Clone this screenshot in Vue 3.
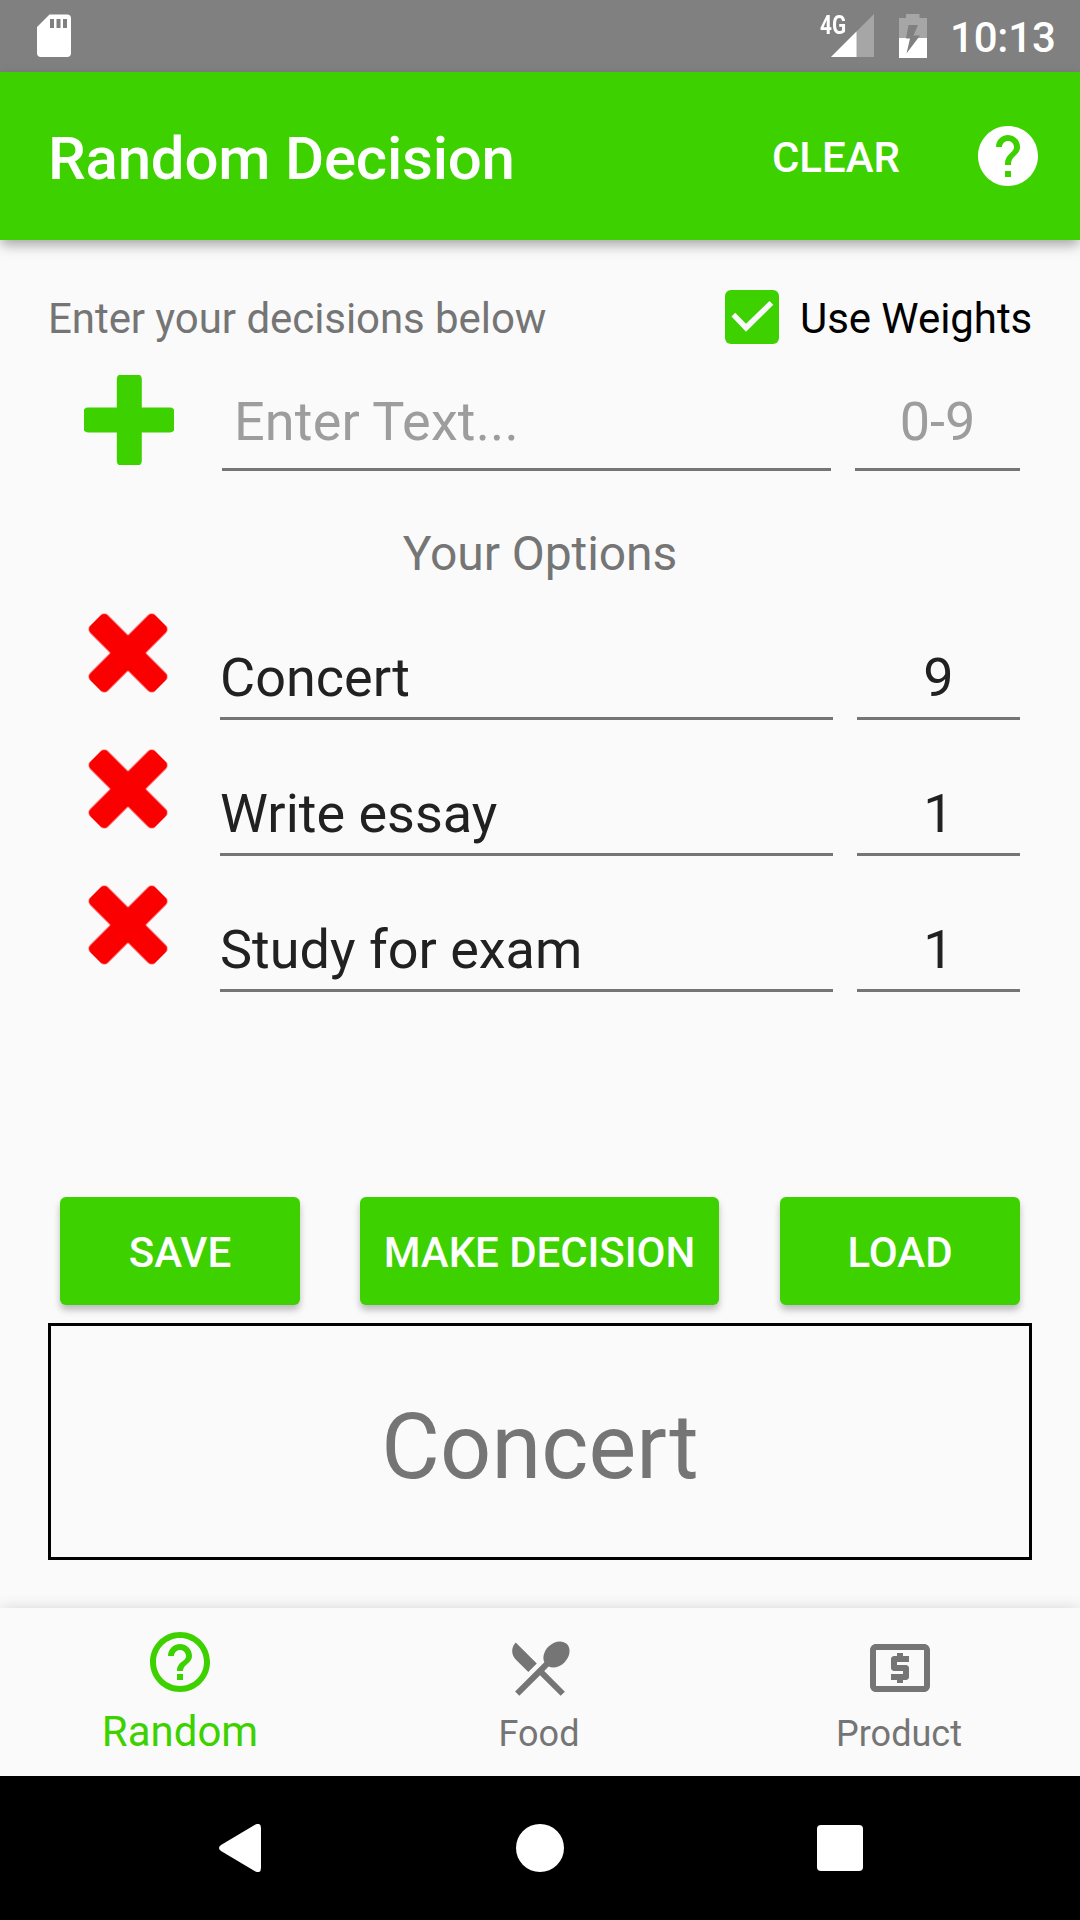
<script setup>
import { ref } from 'vue'

const options = ref([
  { text: 'Concert', weight: 9 },
  { text: 'Write essay', weight: 1 },
  { text: 'Study for exam', weight: 1 },
])
const result = ref('Concert')
</script>

<template>
  <div class="screen">
    <div class="status">
      <svg class="sd" width="34" height="44" viewBox="0 0 34 44">
        <path fill="#fff" fill-rule="evenodd" d="M12.500 .5H30a4 4 0 0 1 4 4V39a4 4 0 0 1-4 4H4a4 4 0 0 1-4-4V13zM13 5v9h4V5zM19.500 5v9h4V5zM26 5v9h4V5z" />
      </svg>
      <div class="status-right">
        <span class="network">4G</span>
        <svg class="signal" width="43" height="43" viewBox="0 0 43 43">
          <path fill="#a6a6a6" d="M43 0V43H0z" />
          <path fill="#fff" d="M25.500 17.500V43H0z" />
        </svg>
        <svg class="battery" width="28" height="44" viewBox="0 0 28 44">
          <path fill="#a6a6a6" d="M7 0H20.500V4H28V24H0V4H7z" />
          <path fill="#fff" d="M0 24H28V44H0z" />
          <path fill="#808080" d="M9.500 11H19L14.500 21.500H21L7.500 39.500L11 24.500H7z" />
        </svg>
        <span class="clock">10:13</span>
      </div>
    </div>

    <header class="appbar">
      <h1>Random Decision</h1>
      <span class="clear">CLEAR</span>
      <svg width="72" height="72" viewBox="0 0 24 24" fill="#fff">
        <path d="M12 2C6.480 2 2 6.480 2 12s4.480 10 10 10 10-4.480 10-10S17.520 2 12 2zm1 17h-2v-2h2v2zm2.070-7.750l-.9.920C13.450 12.900 13 13.500 13 15h-2v-.5c0-1.100.45-2.100 1.170-2.830l1.240-1.260c.37-.36.59-.86.59-1.410 0-1.100-.9-2-2-2s-2 .9-2 2H8c0-2.210 1.790-4 4-4s4 1.790 4 4c0 .88-.36 1.680-.93 2.250z" />
      </svg>
    </header>

    <main>
      <div class="intro">
        <span class="prompt">Enter your decisions below</span>
        <svg width="54" height="54" viewBox="0 0 54 54">
          <rect width="54" height="54" rx="6" fill="#3dd100" />
          <path fill="#fafafa" d="M6.500 26.500L10.200 22.700L21 33.800L44.500 11L48.300 14.800L21 41.700z" />
        </svg>
        <span class="weights">Use Weights</span>
      </div>

      <div class="entry">
        <svg class="plus" width="90" height="90" viewBox="0 0 90 90" fill="#3dd100">
          <g class="soft">
            <rect x="32.800" y="-1" width="25" height="92" rx="5" />
            <rect x="-1" y="32.500" width="92" height="25" rx="5" />
          </g>
        </svg>
        <div class="field hint name">Enter Text...</div>
        <div class="field hint weight">0-9</div>
      </div>

      <h2>Your Options</h2>

      <div v-for="option in options" :key="option.text" class="option">
        <svg class="cross" width="80" height="80" viewBox="-40 -40 80 80" fill="#fb0000">
          <g class="soft" transform="rotate(45)">
            <rect x="-12.500" y="-46" width="25" height="92" rx="5" />
            <rect x="-46" y="-12.500" width="92" height="25" rx="5" />
          </g>
        </svg>
        <div class="field name">{{ option.text }}</div>
        <div class="field weight">{{ option.weight }}</div>
      </div>

      <div class="actions">
        <button class="side">SAVE</button>
        <button class="decide">MAKE DECISION</button>
        <button class="side">LOAD</button>
      </div>

      <div class="result">{{ result }}</div>
    </main>

    <nav class="tabs">
      <div class="tab active">
        <svg width="72" height="72" viewBox="0 0 24 24" fill="currentColor">
          <path d="M11 18h2v-2h-2v2zm1-16C6.480 2 2 6.480 2 12s4.480 10 10 10 10-4.480 10-10S17.520 2 12 2zm0 18c-4.410 0-8-3.590-8-8s3.590-8 8-8 8 3.590 8 8-3.590 8-8 8zm0-14c-2.210 0-4 1.790-4 4h2c0-1.100.9-2 2-2s2 .9 2 2c0 2-3 1.750-3 5h2c0-2.250 3-2.500 3-5 0-2.210-1.790-4-4-4z" />
        </svg>
        <span>Random</span>
      </div>
      <div class="tab">
        <svg width="72" height="72" viewBox="0 0 24 24" fill="currentColor">
          <path d="M8.100 13.340l2.830-2.830L3.910 3.500c-1.560 1.560-1.560 4.090 0 5.660l4.190 4.180zm6.780-1.810c1.530.71 3.680.21 5.270-1.380 1.910-1.910 2.280-4.650.81-6.120-1.460-1.460-4.200-1.100-6.120.81-1.590 1.590-2.090 3.740-1.380 5.270L3.700 19.870l1.410 1.410L12 14.410l6.880 6.880 1.410-1.410L13.410 13l1.470-1.470z" />
        </svg>
        <span>Food</span>
      </div>
      <div class="tab">
        <svg width="72" height="72" viewBox="0 0 24 24" fill="currentColor">
          <path d="M11 17h2v-1h1c.55 0 1-.45 1-1v-3c0-.55-.45-1-1-1h-3v-1h4V8h-2V7h-2v1h-1c-.55 0-1 .45-1 1v3c0 .55.45 1 1 1h3v1H9v2h2v1zm9-13H4c-1.110 0-1.990.89-1.990 2L2 18c0 1.110.89 2 2 2h16c1.110 0 2-.89 2-2V6c0-1.110-.89-2-2-2zm0 14H4V6h16v12z" />
        </svg>
        <span>Product</span>
      </div>
    </nav>

    <div class="system">
      <svg width="42" height="48" viewBox="0 0 42 48" fill="#fff">
        <path d="M36 .7Q42-2 42 4V44Q42 50 36 47.300L2 27Q-2 24 2 21z" />
      </svg>
      <svg class="home" width="48" height="48" viewBox="0 0 48 48" fill="#fff">
        <circle cx="24" cy="24" r="24" />
      </svg>
      <svg width="46" height="46" viewBox="0 0 46 46" fill="#fff">
        <rect width="46" height="46" rx="4" />
      </svg>
    </div>
  </div>
</template>

<style>
body {
  margin: 0;
  background: #fafafa;
}
</style>

<style scoped>
.screen {
  width: 1080px;
  height: 1920px;
  display: flex;
  flex-direction: column;
  overflow: hidden;
  background: #fafafa;
  font-family: Roboto, sans-serif;
  font-size: 42px;
  color: #757575;
}
.screen * {
  box-sizing: border-box;
}
svg {
  display: block;
  flex: none;
}
.soft {
  filter: blur(0.7px);
}
span,
h1,
h2,
.field,
button,
.result {
  white-space: nowrap;
}

.status {
  height: 72px;
  flex: none;
  display: flex;
  justify-content: space-between;
  padding: 14px 24px 0 37px;
  background: #808080;
  color: #fff;
}
.status-right {
  display: flex;
}
.network {
  width: 26px;
  font-size: 26px;
  font-weight: 700;
  line-height: 22px;
  transform: scaleX(0.8);
  transform-origin: 0 0;
  margin-right: -15px;
}
.battery {
  margin-left: 25px;
}
.clock {
  width: 106px;
  margin-left: 23px;
  font-weight: 500;
  line-height: 48px;
  letter-spacing: -0.2px;
}

.appbar {
  position: relative;
  height: 168px;
  flex: none;
  display: flex;
  align-items: center;
  padding: 0 36px 0 48px;
  background: #3dd100;
  color: #fff;
  box-shadow: 0 6px 12px -1px rgba(0, 0, 0, 0.34);
}
h1 {
  flex: 1;
  margin: 0;
  padding-top: 6px;
  font-size: 60px;
  line-height: 70px;
  font-weight: 500;
  letter-spacing: -0.22px;
}
.clear {
  padding-top: 3px;
  margin-right: 72px;
  line-height: 50px;
  font-weight: 500;
}

main {
  height: 1368px;
  flex: none;
  padding: 41px 48px 0;
}
.intro {
  display: flex;
  align-items: center;
  height: 72px;
  letter-spacing: -0.06px;
}
.prompt {
  flex: 1;
  padding-top: 3px;
}
.weights {
  width: 232px;
  margin-left: 21px;
  padding-top: 3px;
  color: #000;
}
.entry {
  display: flex;
  height: 118px;
  padding-left: 36px;
}
.plus {
  margin: 22px 48px 0 0;
}
.field {
  border-bottom: 3px solid #757575;
  font-size: 54px;
  line-height: 64px;
  color: #212121;
}
.weight {
  text-align: center;
}
.entry .field {
  padding-top: 37px;
}
.entry .hint {
  color: #9d9d9d;
}
.entry .name {
  width: 609px;
  padding-left: 12px;
  margin-right: 24px;
  letter-spacing: 0.15px;
}
.entry .weight {
  width: 165px;
}
h2 {
  margin: 55px 0 2px;
  font-size: 48px;
  line-height: 56px;
  font-weight: 400;
  text-align: center;
  letter-spacing: -0.08px;
}
.option {
  display: flex;
  height: 136px;
  padding-left: 40px;
}
.cross {
  margin: 29px 52px 0 0;
}
.option .field {
  padding-top: 62px;
}
.option .name {
  width: 613px;
  margin-right: 24px;
}
.option .weight {
  width: 163px;
}
.actions {
  display: flex;
  margin: 205px 12px 18px;
}
button {
  height: 108px;
  padding: 3px 0 0;
  border: 0;
  border-radius: 6px;
  background: #3dd100;
  color: #fff;
  font: 500 42px Roboto, sans-serif;
  box-shadow: 0 5px 7px rgba(0, 0, 0, 0.25);
}
.side {
  width: 240px;
}
.decide {
  width: 359px;
  margin: 0 61px 0 60px;
  letter-spacing: -0.06px;
}
.result {
  height: 237px;
  border: 3px solid #000;
  padding-top: 11px;
  font-size: 90px;
  line-height: 221px;
  text-align: center;
  letter-spacing: 0.15px;
}

.tabs {
  height: 168px;
  flex: none;
  display: flex;
  background: #fafafa;
  box-shadow: 0 0 14px rgba(0, 0, 0, 0.14);
}
.tab {
  flex: 1;
  display: flex;
  flex-direction: column;
  align-items: center;
  padding-top: 24px;
  font-size: 36px;
}
.tab span {
  line-height: 44px;
}
.active {
  padding-top: 18px;
  font-size: 42px;
  color: #3dd100;
}
.tab.active span {
  line-height: 68px;
}
.tab:not(.active) span {
  margin-top: 8px;
  padding-right: 2px;
}

.system {
  position: relative;
  height: 144px;
  flex: none;
  display: flex;
  align-items: center;
  padding-left: 219px;
  background: #000;
}
.home {
  margin: 0 253px 0 255px;
}
</style>
